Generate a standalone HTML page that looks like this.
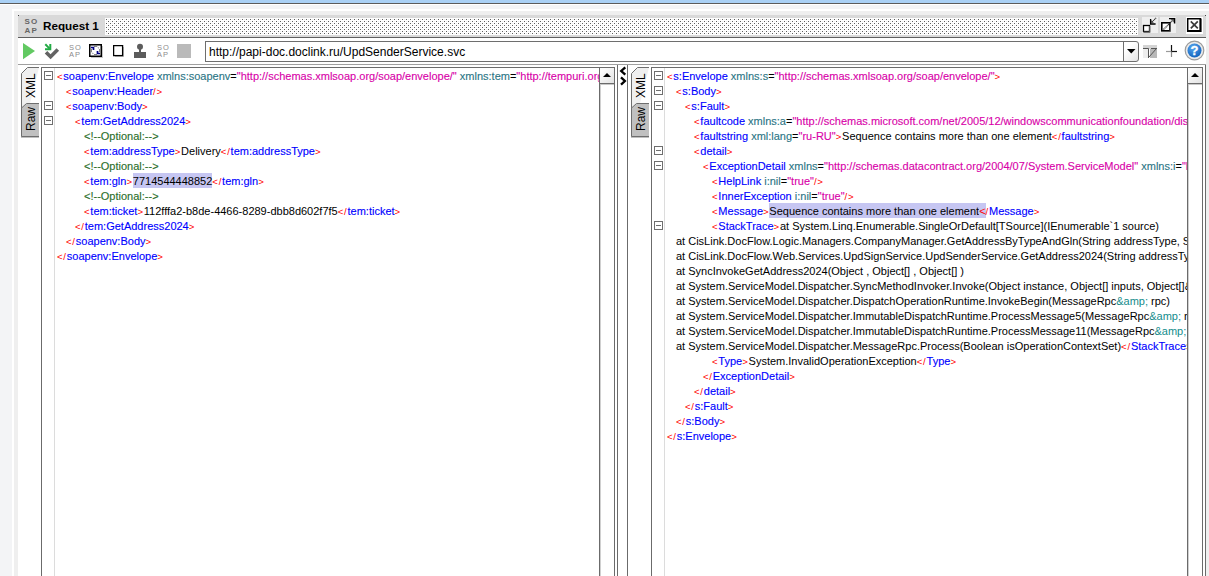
<!DOCTYPE html>
<html><head><meta charset="utf-8">
<style>
*{margin:0;padding:0;box-sizing:border-box}
html,body{width:1209px;height:576px;overflow:hidden;background:#f3f4f6;font-family:"Liberation Sans",sans-serif}
.a{position:absolute}
#topblue{left:0;top:0;width:1209px;height:3px;background:#a9d0f5}
#topdark{left:0;top:3px;width:1209px;height:1px;background:#5b5b5b}
#topwhite{left:0;top:4px;width:1209px;height:1px;background:#fff}
#pwhite{left:12px;top:9px;width:1197px;height:567px;background:#fff}
#pin{left:14px;top:11px;width:1195px;height:565px;background:#efefef}
#hdr{left:18px;top:15px;width:1188px;height:22px;background:#d9d9d9}
#hdrline{left:18px;top:37px;width:1188px;height:1px;background:#5f5f5f}
#tb{left:18px;top:38px;width:1188px;height:26px;background:#fff}
#tbline{left:18px;top:64px;width:1188px;height:1px;background:#a0a0a0}
#main{left:18px;top:65px;width:1188px;height:511px;background:#fff}
#mainr{left:1205px;top:65px;width:1px;height:511px;background:#6b6b6b}
.dot{width:1px;height:1px;background:#444}
#title{left:43px;top:16px;font-weight:bold;font-size:11.7px;line-height:20px;color:#000}
.soapi{font-size:7px;line-height:8px;color:#6b6b6b;letter-spacing:1.5px;font-weight:bold}
#url{left:205px;top:41px;width:919px;height:21px;border:1px solid #6e6e6e;background:#fff}
#urltext{left:209px;top:44px;font-size:12px;line-height:17px;color:#000}
#dd{left:1123px;top:41px;width:16px;height:21px;border:1px solid #6e6e6e;border-radius:0 3px 3px 0;background:linear-gradient(135deg,#fff 30%,#e4e4e4)}
.ed{border-left:1px solid #6b6b6b;border-top:1px solid #6b6b6b;background:#fff}
.gut{border-right:1px solid #dcdcdc;background:#fff}
.cb{position:absolute;width:9px;height:9px;border:1px solid #6e6e6e;background:#fff}
.cb:after{content:"";position:absolute;left:1px;top:3px;width:5px;height:1px;background:#6e6e6e}
.code{position:absolute;overflow:hidden}
.ln{position:absolute;white-space:pre;font-size:11px;line-height:15px;color:#000}
.t{color:#ff0000;font-size:9.6px;letter-spacing:0.75px}.n{color:#0000ff}.an{color:#2b7585}.e{color:#000}.av{color:#d800a8}.c{color:#2a6e2a}.amp{color:#138c8c}
.sel{background:#c6c6f2;padding:2px 0 0.5px}.selt{background:#c6c6f2;color:#ff0000;padding:2px 0 0.5px}
.sb{position:absolute;border-left:1px solid #6b6b6b;border-right:1px solid #6b6b6b;border-top:1px solid #6b6b6b;background:#fff}
.sbup{position:absolute;left:0;top:0;width:14px;height:16px;border-bottom:1px solid #6b6b6b;background:linear-gradient(135deg,#fafafa 20%,#e2e2e2)}
.sbup:after{content:"";position:absolute;left:3px;top:5px;border-left:4px solid transparent;border-right:4px solid transparent;border-bottom:4px solid #000}
.vl{position:absolute;width:1px;background:#6b6b6b}
.sb:before{content:"";position:absolute;left:0;top:17px;width:1px;bottom:0;background:#d0d0d0}
.sb:after{content:"";position:absolute;left:0;top:16px;right:0;height:1px;background:#c8c8c8}
.n,.an,.av,.c{-webkit-text-stroke:0.12px currentColor}

</style></head><body>
<div class="a" id="topblue"></div>
<div class="a" id="topdark"></div>
<div class="a" id="topwhite"></div>
<div class="a" id="pwhite"></div>
<div class="a" id="pin"></div>
<div class="a" id="hdr"></div>
<div class="a dot" style="left:18px;top:15px"></div>
<div class="a dot" style="left:1205px;top:15px"></div>
<div class="a" id="hdrline"></div>
<div class="a" id="tb"></div>
<div class="a" id="tbline"></div>
<div class="a" id="main"></div>
<div class="a" id="mainr"></div>
<!-- header -->
<div class="a soapi" style="left:24.5px;top:18px;font-size:8px;line-height:8.5px;letter-spacing:1.2px;color:#666">SO<br>AP</div>
<div class="a" id="title">Request 1</div>
<svg class="a" style="left:105px;top:18px" width="1033" height="17"><defs><pattern id="dp" width="4" height="4" patternUnits="userSpaceOnUse"><rect width="4" height="4" fill="#fff"/><rect x="1" y="1" width="1" height="1" fill="#5e5e5e"/><rect x="3" y="3" width="1" height="1" fill="#5e5e5e"/><rect x="3" y="1" width="1" height="1" fill="#ececec"/><rect x="1" y="3" width="1" height="1" fill="#ececec"/></pattern></defs><rect width="1033" height="17" fill="url(#dp)"/></svg>
<!-- header icons -->
<svg class="a" style="left:1142px;top:17px" width="16" height="16"><rect width="16" height="16" fill="#efefef"/><rect x="1.5" y="8.5" width="6" height="6" fill="#fff" stroke="#000" stroke-width="1.3"/><path d="M7.7 9v6.2H1.5" fill="none" stroke="#555" stroke-width="1.2"/><path d="M9 3L9 6L12 6z" fill="#6a6a6a"/><path d="M8.6 2V7H13.6" fill="none" stroke="#000" stroke-width="1.3"/><path d="M10 5L14.5 0.5" stroke="#333" stroke-width="1.2" stroke-dasharray="1 0.6"/></svg>
<svg class="a" style="left:1160px;top:17px" width="16" height="16"><rect width="16" height="16" fill="#efefef"/><rect x="1.8" y="5.8" width="8" height="8" fill="#fff" stroke="#000" stroke-width="1.6"/><path d="M10.2 6v8.6H1.5" fill="none" stroke="#555" stroke-width="1"/><path d="M3.5 12.5L12.5 3.5" stroke="#222" stroke-width="1.2" stroke-dasharray="1 0.6"/><path d="M10 1.5L14.5 1.5L14.5 6z" fill="#666"/><path d="M9 1.6H14.6V6.5" fill="none" stroke="#000" stroke-width="1.4"/></svg>
<svg class="a" style="left:1186px;top:17px" width="17" height="17"><rect x="0" y="0" width="17" height="17" fill="#fff"/><rect x="1" y="1" width="14" height="14" fill="#fff"/><path d="M1.7 15V1.7H15" fill="none" stroke="#000" stroke-width="1.5"/><path d="M2 14h12.5V1.5" fill="none" stroke="#000" stroke-width="2.2"/><path d="M4.8 4.3l7 7M11.8 4.3l-7 7" stroke="#3a3a3a" stroke-width="1.7"/></svg>
<!-- toolbar -->
<svg class="a" style="left:23px;top:43px" width="13" height="17"><path d="M0 0L12 8.1L0 16.2z" fill="#62c962"/></svg>
<svg class="a" style="left:40px;top:40px" width="22" height="22"><path d="M6 12.3L10.6 16.8L17.8 9.5" fill="none" stroke="#636363" stroke-width="3.6"/><path d="M5.3 4.3L9.6 8.6" stroke="#22aa44" stroke-width="2"/><path d="M5 9.2H10.3V4" fill="none" stroke="#22aa44" stroke-width="2"/></svg>
<div class="a soapi" style="left:69px;top:45px;color:#8c8c8c;font-weight:normal;font-size:7.5px;line-height:6.8px;letter-spacing:1px">SO<br>AP</div>
<svg class="a" style="left:89px;top:44px" width="15" height="15"><rect x="13" y="2" width="1" height="12" fill="#c8c8c8"/><rect x="2" y="13" width="12" height="1" fill="#c8c8c8"/><rect x="0.75" y="0.75" width="11.5" height="11.5" fill="#fff" stroke="#000" stroke-width="1.5"/><path d="M5 2.5H8M10.5 5V8M5 10.5H8M2.5 5V8M8.6 3L10 4.4M3 8.6L4.4 10" fill="none" stroke="#858585" stroke-width="1"/><path d="M2 3.5H4.5V6" fill="none" stroke="#000080" stroke-width="1.7"/><path d="M8.5 7V9.5H11" fill="none" stroke="#000080" stroke-width="1.7"/></svg>
<svg class="a" style="left:113px;top:45px" width="12" height="13"><rect x="10" y="2" width="1" height="10" fill="#c4c4c4"/><rect x="2" y="11" width="9" height="1" fill="#c4c4c4"/><rect x="0.6" y="0.6" width="9" height="10" fill="#fff" stroke="#000" stroke-width="1.3"/></svg>
<svg class="a" style="left:133px;top:43px" width="14" height="16"><circle cx="7" cy="3.8" r="3" fill="#5c5c5c"/><rect x="6" y="5" width="2" height="4" fill="#5c5c5c"/><rect x="1" y="9" width="12" height="6" fill="#5c5c5c"/></svg>
<div class="a soapi" style="left:157px;top:45px;color:#8c8c8c;font-weight:normal;font-size:7.5px;line-height:6.8px;letter-spacing:1px">SO<br>AP</div>
<div class="a" style="left:177px;top:44px;width:14px;height:14px;background:#bababa"></div>
<div class="a" id="url"></div>
<div class="a" id="urltext">http://papi-doc.doclink.ru/UpdSenderService.svc</div>
<div class="a" id="dd"></div>
<svg class="a" style="left:1127px;top:49px" width="9" height="5"><path d="M0 0h8.5L4.25 4.5z" fill="#000"/></svg>
<svg class="a" style="left:1143px;top:45px" width="14" height="13"><rect x="0" y="0" width="14" height="4" fill="#d4d4d4"/><rect x="0" y="4" width="6" height="9" fill="#eeeeee"/><rect x="7" y="4" width="7" height="9" fill="#b8b8b8"/><path d="M0 3.5h5.5v9.5" fill="none" stroke="#555" stroke-width="1"/><path d="M6 12L13.5 3.5" stroke="#555" stroke-width="1"/><path d="M8 3.5h6" stroke="#555" stroke-width="1"/></svg>
<svg class="a" style="left:1165px;top:45px" width="13" height="13"><path d="M6.5 0v6.5" stroke="#111" stroke-width="1.2"/><path d="M6.5 6.5v5.5" stroke="#888" stroke-width="1.2"/><path d="M1 6.5h5.5" stroke="#999" stroke-width="1.2"/><path d="M6.5 6.5h5.5" stroke="#111" stroke-width="1.2"/></svg>
<svg class="a" style="left:1184px;top:40px" width="21" height="21"><circle cx="10.5" cy="10.5" r="9.3" fill="#ebebeb" stroke="#9c9c9c" stroke-width="1.2"/><defs><radialGradient id="hg" cx="0.4" cy="0.3" r="0.8"><stop offset="0" stop-color="#5aa8f0"/><stop offset="1" stop-color="#0a5cb8"/></radialGradient></defs><circle cx="10.5" cy="10.5" r="7" fill="url(#hg)"/><text x="10.5" y="15" font-family="Liberation Sans" font-weight="bold" font-size="13" fill="#fff" text-anchor="middle" stroke="#fff" stroke-width="0.3">?</text></svg>
<!-- LEFT PANE -->
<div class="a" style="left:21px;top:67px;width:20px;height:500px"></div>
<svg class="a" style="left:20px;top:66px" width="21" height="72">
<path d="M1.5 71V7.5L7.5 1.5H19" fill="#efefef" stroke="#6e6e6e" stroke-width="1"/>
<path d="M1 72V42.5L6.5 37.5H19V72z" fill="#c0c0c0"/>
<path d="M1.5 70.5V42L6.5 37.5H19" fill="none" stroke="#6e6e6e" stroke-width="1"/>
<path d="M1.5 70.5H19" stroke="#6e6e6e" stroke-width="1"/>
</svg>
<div class="a" style="left:20px;top:66px;width:21px;height:72px;overflow:visible">
<div style="position:absolute;left:5px;top:32px;transform-origin:0 0;transform:rotate(-90deg);font-size:12px;line-height:12px;white-space:nowrap">XML</div>
<div style="position:absolute;left:5px;top:65px;transform-origin:0 0;transform:rotate(-90deg);font-size:12px;line-height:12px;white-space:nowrap">Raw</div>
</div>
<div class="a ed" style="left:41px;top:67px;width:560px;height:509px"></div>
<div class="a gut" style="left:42px;top:68px;width:13px;height:508px"></div>
<div class="cb" style="left:44px;top:71px"></div>
<div class="cb" style="left:44px;top:101px"></div>
<div class="cb" style="left:44px;top:116px"></div>
<div class="code" style="left:55px;top:68px;width:544px;height:508px">
<div style="position:absolute;left:2px;top:1px">
<div class="ln" style="top:0px;left:0px"><span class="t">&lt;</span><span class="n">soapenv:Envelope</span> <span class="an">xmlns:soapenv</span><span class="e">=</span><span class="av">"http://schemas.xmlsoap.org/soap/envelope/"</span> <span class="an">xmlns:tem</span><span class="e">=</span><span class="av">"http://tempuri.org/"</span><span class="t">&gt;</span></div>
<div class="ln" style="top:15px;left:9px"><span class="t">&lt;</span><span class="n">soapenv:Header</span><span class="t">/&gt;</span></div>
<div class="ln" style="top:30px;left:9px"><span class="t">&lt;</span><span class="n">soapenv:Body</span><span class="t">&gt;</span></div>
<div class="ln" style="top:45px;left:18px"><span class="t">&lt;</span><span class="n">tem:GetAddress2024</span><span class="t">&gt;</span></div>
<div class="ln" style="top:60px;left:27px"><span class="c">&lt;!--Optional:--&gt;</span></div>
<div class="ln" style="top:75px;left:27px"><span class="t">&lt;</span><span class="n">tem:addressType</span><span class="t">&gt;</span>Delivery<span class="t">&lt;/</span><span class="n">tem:addressType</span><span class="t">&gt;</span></div>
<div class="ln" style="top:90px;left:27px"><span class="c">&lt;!--Optional:--&gt;</span></div>
<div class="ln" style="top:105px;left:27px"><span class="t">&lt;</span><span class="n">tem:gln</span><span class="t">&gt;</span><span class="sel">7714544448852</span><span class="t">&lt;/</span><span class="n">tem:gln</span><span class="t">&gt;</span></div>
<div class="ln" style="top:120px;left:27px"><span class="c">&lt;!--Optional:--&gt;</span></div>
<div class="ln" style="top:135px;left:27px"><span class="t">&lt;</span><span class="n">tem:ticket</span><span class="t">&gt;</span>112fffa2-b8de-4466-8289-dbb8d602f7f5<span class="t">&lt;/</span><span class="n">tem:ticket</span><span class="t">&gt;</span></div>
<div class="ln" style="top:150px;left:18px"><span class="t">&lt;/</span><span class="n">tem:GetAddress2024</span><span class="t">&gt;</span></div>
<div class="ln" style="top:165px;left:9px"><span class="t">&lt;/</span><span class="n">soapenv:Body</span><span class="t">&gt;</span></div>
<div class="ln" style="top:180px;left:0px"><span class="t">&lt;/</span><span class="n">soapenv:Envelope</span><span class="t">&gt;</span></div>
</div></div>
<div class="sb" style="left:599px;top:67px;width:16px;height:509px"><div class="sbup"></div></div>
<div class="vl" style="left:617px;top:65px;height:511px"></div>
<div class="vl" style="left:627px;top:65px;height:511px"></div>
<svg class="a" style="left:619px;top:66px" width="9" height="20"><path d="M6.3 1.3L2.2 5L6.3 8.7" fill="none" stroke="#000" stroke-width="2.3"/><path d="M2 11.3L5.9 15L2 18.7" fill="none" stroke="#000" stroke-width="2.3"/></svg>
<!-- RIGHT PANE -->
<svg class="a" style="left:630px;top:66px" width="21" height="72">
<path d="M1.5 71V7.5L7.5 1.5H19" fill="#efefef" stroke="#6e6e6e" stroke-width="1"/>
<path d="M1 72V42.5L6.5 37.5H19V72z" fill="#c0c0c0"/>
<path d="M1.5 70.5V42L6.5 37.5H19" fill="none" stroke="#6e6e6e" stroke-width="1"/>
<path d="M1.5 70.5H19" stroke="#6e6e6e" stroke-width="1"/>
</svg>
<div class="a" style="left:630px;top:66px;width:21px;height:72px;overflow:visible">
<div style="position:absolute;left:5px;top:32px;transform-origin:0 0;transform:rotate(-90deg);font-size:12px;line-height:12px;white-space:nowrap">XML</div>
<div style="position:absolute;left:5px;top:65px;transform-origin:0 0;transform:rotate(-90deg);font-size:12px;line-height:12px;white-space:nowrap">Raw</div>
</div>
<div class="a ed" style="left:651px;top:67px;width:538px;height:509px"></div>
<div class="a gut" style="left:652px;top:68px;width:13px;height:508px"></div>
<div class="cb" style="left:654px;top:71px"></div>
<div class="cb" style="left:654px;top:86px"></div>
<div class="cb" style="left:654px;top:101px"></div>
<div class="cb" style="left:654px;top:146px"></div>
<div class="cb" style="left:654px;top:161px"></div>
<div class="cb" style="left:654px;top:221px"></div>
<div class="code" style="left:665px;top:68px;width:522px;height:508px">
<div style="position:absolute;left:2px;top:1px">
<div class="ln" style="top:0px;left:0px"><span class="t">&lt;</span><span class="n">s:Envelope</span> <span class="an">xmlns:s</span><span class="e">=</span><span class="av">"http://schemas.xmlsoap.org/soap/envelope/"</span><span class="t">&gt;</span></div>
<div class="ln" style="top:15px;left:9px"><span class="t">&lt;</span><span class="n">s:Body</span><span class="t">&gt;</span></div>
<div class="ln" style="top:30px;left:18px"><span class="t">&lt;</span><span class="n">s:Fault</span><span class="t">&gt;</span></div>
<div class="ln" style="top:45px;left:27px"><span class="t">&lt;</span><span class="n">faultcode</span> <span class="an">xmlns:a</span><span class="e">=</span><span class="av">"http://schemas.microsoft.com/net/2005/12/windowscommunicationfoundation/dispatcher"</span><span class="t">&gt;</span>a:InternalServiceFault</div>
<div class="ln" style="top:60px;left:27px"><span class="t">&lt;</span><span class="n">faultstring</span> <span class="an">xml:lang</span><span class="e">=</span><span class="av">"ru-RU"</span><span class="t">&gt;</span>Sequence contains more than one element<span class="t">&lt;/</span><span class="n">faultstring</span><span class="t">&gt;</span></div>
<div class="ln" style="top:75px;left:27px"><span class="t">&lt;</span><span class="n">detail</span><span class="t">&gt;</span></div>
<div class="ln" style="top:90px;left:36px"><span class="t">&lt;</span><span class="n">ExceptionDetail</span> <span class="an">xmlns</span><span class="e">=</span><span class="av">"http://schemas.datacontract.org/2004/07/System.ServiceModel"</span> <span class="an">xmlns:i</span><span class="e">=</span><span class="av">"http://www.w3.org/2001/XMLSchema-instance"</span><span class="t">&gt;</span></div>
<div class="ln" style="top:105px;left:45px"><span class="t">&lt;</span><span class="n">HelpLink</span> <span class="an">i:nil</span><span class="e">=</span><span class="av">"true"</span><span class="t">/&gt;</span></div>
<div class="ln" style="top:120px;left:45px"><span class="t">&lt;</span><span class="n">InnerException</span> <span class="an">i:nil</span><span class="e">=</span><span class="av">"true"</span><span class="t">/&gt;</span></div>
<div class="ln" style="top:135px;left:45px"><span class="t">&lt;</span><span class="n">Message</span><span class="t">&gt;</span><span class="sel">Sequence contains more than one element</span><span class="selt">&lt;</span><span class="t">/</span><span class="n">Message</span><span class="t">&gt;</span></div>
<div class="ln" style="top:150px;left:45px"><span class="t">&lt;</span><span class="n">StackTrace</span><span class="t">&gt;</span>at System.Linq.Enumerable.SingleOrDefault[TSource](IEnumerable`1 source)</div>
<div class="ln" style="top:165px;left:9px">at CisLink.DocFlow.Logic.Managers.CompanyManager.GetAddressByTypeAndGln(String addressType, String gln)</div>
<div class="ln" style="top:180px;left:9px">at CisLink.DocFlow.Web.Services.UpdSignService.UpdSenderService.GetAddress2024(String addressType, String gln, String ticket)</div>
<div class="ln" style="top:195px;left:9px">at SyncInvokeGetAddress2024(Object , Object[] , Object[] )</div>
<div class="ln" style="top:210px;left:9px">at System.ServiceModel.Dispatcher.SyncMethodInvoker.Invoke(Object instance, Object[] inputs, Object[]&amp; outputs)</div>
<div class="ln" style="top:225px;left:9px">at System.ServiceModel.Dispatcher.DispatchOperationRuntime.InvokeBegin(MessageRpc<span class="amp">&amp;amp;</span> rpc)</div>
<div class="ln" style="top:240px;left:9px">at System.ServiceModel.Dispatcher.ImmutableDispatchRuntime.ProcessMessage5(MessageRpc<span class="amp">&amp;amp;</span> rpc)</div>
<div class="ln" style="top:255px;left:9px">at System.ServiceModel.Dispatcher.ImmutableDispatchRuntime.ProcessMessage11(MessageRpc<span class="amp">&amp;amp;</span> rpc)</div>
<div class="ln" style="top:270px;left:9px">at System.ServiceModel.Dispatcher.MessageRpc.Process(Boolean isOperationContextSet)<span class="t">&lt;/</span><span class="n">StackTrace</span><span class="t">&gt;</span></div>
<div class="ln" style="top:285px;left:45px"><span class="t">&lt;</span><span class="n">Type</span><span class="t">&gt;</span>System.InvalidOperationException<span class="t">&lt;/</span><span class="n">Type</span><span class="t">&gt;</span></div>
<div class="ln" style="top:300px;left:36px"><span class="t">&lt;/</span><span class="n">ExceptionDetail</span><span class="t">&gt;</span></div>
<div class="ln" style="top:315px;left:27px"><span class="t">&lt;/</span><span class="n">detail</span><span class="t">&gt;</span></div>
<div class="ln" style="top:330px;left:18px"><span class="t">&lt;/</span><span class="n">s:Fault</span><span class="t">&gt;</span></div>
<div class="ln" style="top:345px;left:9px"><span class="t">&lt;/</span><span class="n">s:Body</span><span class="t">&gt;</span></div>
<div class="ln" style="top:360px;left:0px"><span class="t">&lt;/</span><span class="n">s:Envelope</span><span class="t">&gt;</span></div>
</div></div>
<div class="sb" style="left:1187px;top:67px;width:16px;height:509px"><div class="sbup"></div></div>

</body></html>
